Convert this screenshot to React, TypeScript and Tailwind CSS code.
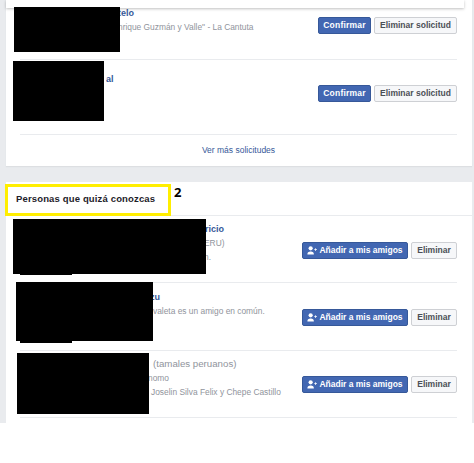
type Line = { text: string; className: string };

type Row = {
  rowClass: string;
  textTop: string;
  buttonTop: string;
  lines: Line[];
};

const nameClass = "text-[#365899] font-bold text-[9px] leading-[14px]";
const metaClass = "text-[#90949c] text-[8.4px] leading-[14px]";

const requests: Row[] = [
  {
    rowClass: "h-[67px] border-b border-[#e9ebee]",
    textTop: "pt-[13px]",
    buttonTop: "pt-[24px]",
    lines: [
      { text: "telo", className: `${nameClass} pl-[98px]` },
      { text: "nrique Guzmán y Valle\" - La Cantuta", className: `${metaClass} pl-[98px]` },
    ],
  },
  {
    rowClass: "h-[75px] border-b border-[#e9ebee]",
    textTop: "pt-[12px]",
    buttonTop: "pt-[25px]",
    lines: [{ text: "al", className: `${nameClass} pl-[86px]` }],
  },
];

const suggestions: Row[] = [
  {
    rowClass: "h-[67px] border-b border-[#e9ebee]",
    textTop: "pt-[6px]",
    buttonTop: "pt-[26px]",
    lines: [
      { text: "ricio", className: `${nameClass} pl-[185px]` },
      { text: "ERU)", className: `${metaClass} pl-[184px]` },
      { text: "n.", className: `${metaClass} pl-[184px]` },
    ],
  },
  {
    rowClass: "h-[68px] border-b border-[#e9ebee]",
    textTop: "pt-[7px]",
    buttonTop: "pt-[26px]",
    lines: [
      { text: "zu", className: `${nameClass} pl-[130px]` },
      { text: "valeta es un amigo en común.", className: `${metaClass} pl-[133px]` },
    ],
  },
  {
    rowClass: "h-[67px] border-b border-[#e9ebee]",
    textTop: "pt-[6px]",
    buttonTop: "pt-[25px]",
    lines: [
      { text: "(tamales peruanos)", className: "text-[#90949c] text-[9.7px] leading-[14px] pl-[133px]" },
      { text: "nomo", className: `${metaClass} pl-[128px]` },
      { text: "Joselin Silva Felix y Chepe Castillo", className: `${metaClass} pl-[131px]` },
    ],
  },
];

// black boxes painted over the avatars in the original screenshot
const redactions = [
  "left-[14px] top-[7px] w-[106px] h-[45px]",
  "left-[13px] top-[61px] w-[91px] h-[60px]",
  "left-[13px] top-[219px] w-[193px] h-[55px]",
  "left-[20px] top-[274px] w-[52px] h-[1px]",
  "left-[16px] top-[282px] w-[137px] h-[59px]",
  "left-[20px] top-[341px] w-[52px] h-[2px]",
  "left-[17px] top-[353px] w-[132px] h-[61px]",
];

function AddFriendIcon() {
  return (
    <svg width="10" height="9" viewBox="0 0 11 10" fill="white" className="shrink-0">
      <circle cx="4" cy="2.6" r="2.3" />
      <path d="M0.4 9.4c0-2 .9-2.6 2.2-3l.7-.4h1.4l.7.4c1.3.4 2.2 1 2.2 3z" />
      <path d="M8 3.6h1V2.4h.8v1.2H11v.8H9.8v1.2H9V4.4H8z" />
    </svg>
  );
}

function RowTexts({ row }: { row: Row }) {
  return (
    <div className={`flex-1 min-w-0 whitespace-nowrap ${row.textTop}`}>
      {row.lines.map((line) => (
        <div key={line.text} className={line.className}>
          {line.text}
        </div>
      ))}
    </div>
  );
}

function GrayButton({ label, className }: { label: string; className: string }) {
  return (
    <button className={`h-[17px] whitespace-nowrap rounded-[2px] border border-[#ced0d4] bg-[#f6f7f9] text-[#4b4f56] font-bold text-[8.5px] leading-none ${className}`}>
      {label}
    </button>
  );
}

export default function App() {
  return (
    <div className="relative w-[474px] h-[463px] overflow-hidden bg-white font-['Liberation_Sans',Arial,sans-serif]">
      <div className="h-[423px] overflow-hidden bg-[#e9ebee] pl-[6px] pr-[2px]">
        <section className="-mt-[7px] h-[173px] bg-white pl-[14px] pr-[15px] shadow-[0_1px_1px_#dddfe2]">
          {requests.map((row) => (
            <div key={row.lines[0].text} className={`flex ${row.rowClass}`}>
              <RowTexts row={row} />
              <div className={`flex gap-[3px] ${row.buttonTop}`}>
                <button className="h-[17px] w-[53px] rounded-[2px] border border-[#365899] bg-[#4267b2] text-white font-bold text-[8.5px] tracking-[0.2px] leading-none">
                  Confirmar
                </button>
                <GrayButton label="Eliminar solicitud" className="w-[83px]" />
              </div>
            </div>
          ))}
          <div className="pt-[8px] pb-[9px] text-center text-[8.5px] leading-[14px] text-[#365899]">Ver más solicitudes</div>
        </section>

        <section className="mt-[16px] h-[260px] bg-white">
          <div className="h-[34px] border-b border-[#e9ebee] pl-[10px] pt-[10px] text-[9.5px] leading-[14px] tracking-[0.15px] font-bold text-[#1d2129]">
            Personas que quizá conozcas
          </div>
          <div className="pl-[14px] pr-[15px]">
            {suggestions.map((row) => (
              <div key={row.lines[0].text} className={`flex ${row.rowClass}`}>
                <RowTexts row={row} />
                <div className={`flex gap-[3px] ${row.buttonTop}`}>
                  <button className="h-[17px] w-[106px] whitespace-nowrap flex items-center justify-center gap-[2px] rounded-[2px] border border-[#365899] bg-[#4267b2] text-white font-bold text-[8.5px] leading-none">
                    <AddFriendIcon />
                    Añadir a mis amigos
                  </button>
                  <GrayButton label="Eliminar" className="w-[46px]" />
                </div>
              </div>
            ))}
          </div>
        </section>
      </div>

      {/* sticky bar edge at the top of the capture */}
      <div className="absolute left-[6px] top-0 w-[458px] h-[8px] bg-white shadow-[0_1px_3px_rgba(0,0,0,0.25)]" />

      {redactions.map((box) => (
        <div key={box} className={`absolute bg-black ${box}`} />
      ))}

      {/* yellow annotation */}
      <div className="absolute left-[5px] top-[184px] w-[166px] h-[32px] border-[3px] border-[#ffee00]" />
      <div className="absolute left-[174px] top-[185px] text-[13px] leading-[15px] font-bold text-black font-['Open_Sans',sans-serif]">2</div>
    </div>
  );
}
